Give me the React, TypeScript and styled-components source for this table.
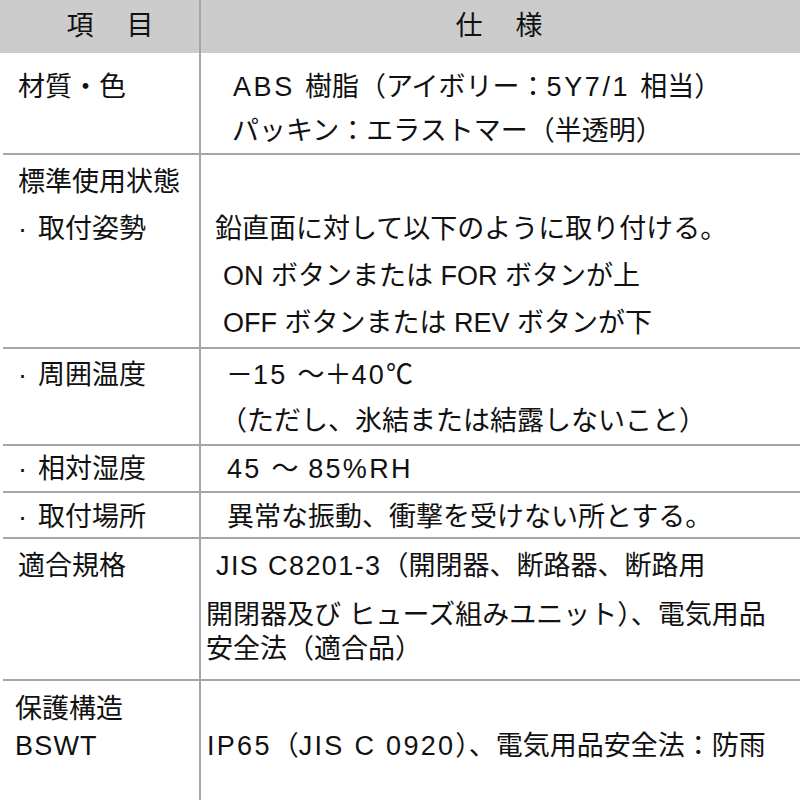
import * as React from "react";
import styled, {createGlobalStyle} from "styled-components";

const GlobalStyle = createGlobalStyle`
    html, body {
        margin: 0;
        padding: 0;
        background: #ffffff;
    }
    body {
        font-family: "Liberation Sans", "Noto Sans CJK JP", sans-serif;
        color: #111111;
    }
    * {
        box-sizing: border-box;
    }
`;

const LINE = "#a6a6a6";

const Table = styled.div`
    width: 800px;
    height: 800px;
    overflow: hidden;
    display: flex;
    flex-direction: column;
`;

const HeaderRow = styled.div`
    display: grid;
    grid-template-columns: 201px 1fr;
    height: 53px;
    background: #cccccc;
`;

const HeaderCell = styled.div<{$divider?: boolean; $pl?: number}>`
    font-size: 27px;
    letter-spacing: 3px;
    line-height: 53px;
    text-align: center;
    padding-left: ${({$pl}) => $pl || 0}px;
    border-right: ${({$divider}) => ($divider ? `2px solid ${LINE}` : "none")};
`;

const Row = styled.div<{$last?: boolean}>`
    display: grid;
    grid-template-columns: 198px 1fr;
    margin-left: 3px;
    border-bottom: ${({$last}) => ($last ? "none" : `2px solid ${LINE}`)};
    flex: ${({$last}) => ($last ? 1 : "none")};
    font-size: 27px;
`;

const Cell = styled.div<{$left?: boolean; $pt: number; $pb?: number; $lh: number; $skip?: number}>`
    padding-top: ${({$pt, $lh, $skip}) => $pt + $lh * ($skip || 0)}px;
    padding-bottom: ${({$pb}) => $pb || 0}px;
    padding-left: ${({$left}) => ($left ? 15 : 0)}px;
    line-height: ${({$lh}) => $lh}px;
    border-right: ${({$left}) => ($left ? `2px solid ${LINE}` : "none")};
`;

const Line = styled.div<{$indent?: number}>`
    margin-left: ${({$indent}) => $indent || 0}px;
    white-space: nowrap;
`;

// latin runs are set wider in the original
const En = styled.span<{$ls?: number}>`
    letter-spacing: ${({$ls}) => $ls ?? 2.3}px;
`;

const Wrapped = styled.div`
    margin-top: 8px;
    line-height: 34px;
`;

const Bullet = styled.span`
    display: inline-block;
    width: 20px;
`;

const App: React.FC = (): JSX.Element => {
    return (
        <>
            <GlobalStyle />
            <Table lang="ja">
                <HeaderRow>
                    <HeaderCell $divider $pl={24}>項　目</HeaderCell>
                    <HeaderCell>仕　様</HeaderCell>
                </HeaderRow>

                <Row>
                    <Cell $left $pt={12} $lh={44}>
                        <Line>材質・色</Line>
                    </Cell>
                    <Cell $pt={12} $lh={44}>
                        <Line $indent={32}><En $ls={2.6}>ABS </En>樹脂（アイボリー：<En $ls={2.6}>5Y7/1 </En>相当）</Line>
                        <Line $indent={31}>パッキン：エラストマー（半透明）</Line>
                    </Cell>
                </Row>

                <Row>
                    <Cell $left $pt={4} $lh={47}>
                        <Line>標準使用状態</Line>
                        <Line><Bullet>·</Bullet>取付姿勢</Line>
                    </Cell>
                    <Cell $pt={4} $lh={47} $skip={1}>
                        <Line $indent={14}>鉛直面に対して以下のように取り付ける。</Line>
                        <Line $indent={22}>ON ボタンまたは FOR ボタンが上</Line>
                        <Line $indent={22}>OFF ボタンまたは REV ボタンが下</Line>
                    </Cell>
                </Row>

                <Row>
                    <Cell $left $pt={3} $lh={46}>
                        <Line><Bullet>·</Bullet>周囲温度</Line>
                    </Cell>
                    <Cell $pt={3} $lh={46}>
                        <Line $indent={25}>－<En>15 </En>〜＋<En>40</En>℃</Line>
                        <Line $indent={19}>（ただし、氷結または結露しないこと）</Line>
                    </Cell>
                </Row>

                <Row>
                    <Cell $left $pt={1} $lh={44}>
                        <Line><Bullet>·</Bullet>相対湿度</Line>
                    </Cell>
                    <Cell $pt={1} $lh={44}>
                        <Line $indent={26}><En>45 </En>〜<En> 85%RH</En></Line>
                    </Cell>
                </Row>

                <Row>
                    <Cell $left $pt={4} $lh={40}>
                        <Line><Bullet>·</Bullet>取付場所</Line>
                    </Cell>
                    <Cell $pt={4} $lh={40}>
                        <Line $indent={26}>異常な振動、衝撃を受けない所とする。</Line>
                    </Cell>
                </Row>

                <Row>
                    <Cell $left $pt={3} $lh={48}>
                        <Line>適合規格</Line>
                    </Cell>
                    <Cell $pt={3} $pb={13} $lh={48}>
                        <Line $indent={15}><En $ls={1.4}>JIS C8201-3</En>（開閉器、断路器、断路用</Line>
                        <Wrapped>
                            <Line $indent={5}>開閉器及び ヒューズ組みユニット）、電気用品</Line>
                            <Line $indent={5}>安全法（適合品）</Line>
                        </Wrapped>
                    </Cell>
                </Row>

                <Row $last>
                    <Cell $left $pt={10} $lh={37}>
                        <Line $indent={-3}>保護構造</Line>
                        <Line $indent={-3}><En $ls={1.2}>BSWT</En></Line>
                    </Cell>
                    <Cell $pt={10} $lh={37} $skip={1}>
                        <Line $indent={6}><En>IP65</En>（<En>JIS C 0920</En>）、電気用品安全法：防雨</Line>
                    </Cell>
                </Row>
            </Table>
        </>
    );
}

export default App;
